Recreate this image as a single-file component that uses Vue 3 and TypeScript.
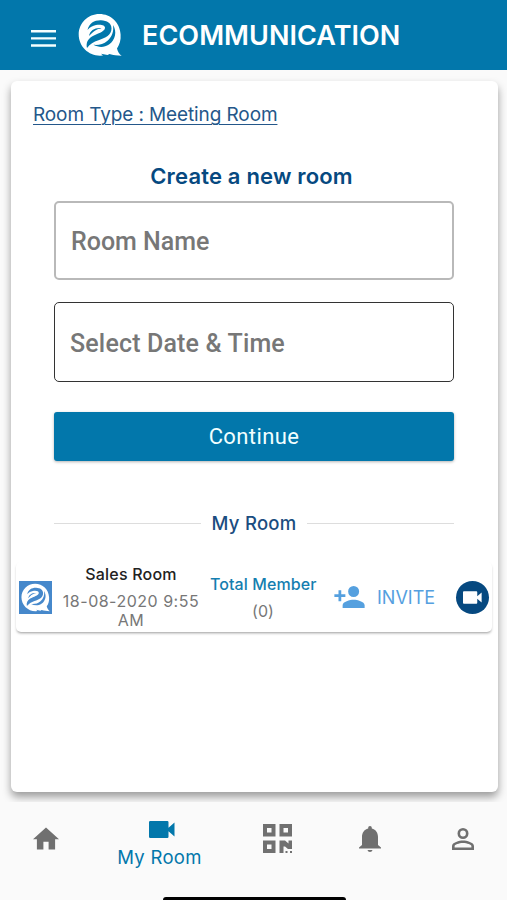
<script setup lang="ts">
import { ref } from 'vue'

interface Room {
  name: string
  date: string
  members: number
}

const rooms = ref<Room[]>([{ name: 'Sales Room', date: '18-08-2020 9:55 AM', members: 0 }])
const roomName = ref('')
const roomTime = ref('')
</script>

<template>
  <div class="app">
    <svg class="symbols" aria-hidden="true">
      <symbol id="logo" viewBox="0 0 44 44">
        <path
          d="M21.4 1C9.8 1 .7 10.2.7 21.5.7 33.300 10.400 42.700 22 42.700l3-.2-2-1.800 6.500 1.200c.7-.3 1.400-.6 2-.9 3.500 1.200 7.500 1.700 12.200 1.700-2.400-1.700-3.900-4-4.700-7.300C41.700 31.500 43 27 42.600 21.500 42 9.500 32.800 1 21.400 1Z"
        />
        <g class="swirl">
          <path d="M9.500 17C11 10 17 7 23 7.300c6 .2 10.500 3 10.500 8.200 0 6.500-6 9.500-13 11.700-5 1.600-8.500 3.800-11.500 7.800-1.200-5 .8-9 5-11.500 5-3 12.500-4.500 13-8.500.3-3-4.500-4-9-3-3.500.7-6 2-8.500 5Z" />
          <path d="M11 23c1-5.500 6-8.500 12.500-7.800-5 1-7.500 2.300-12.500 7.800Z" />
          <path d="M35 12c4.200 6.500 2.500 15-4 19.500-5 3.300-10.500 3-15.500.3 5 .5 10-.6 14-4.100 4.500-4 6.500-9.200 5.500-15.700Z" />
        </g>
      </symbol>
      <symbol id="camera" viewBox="0 0 26 17">
        <path d="M1.200 0h17.100A1.200 1.200 0 0 1 19.500 1.200v5.600L25.500 1.500v14l-6-5.300v5.600a1.200 1.200 0 0 1-1.200 1.200H1.200A1.200 1.200 0 0 1 0 15.800V1.200A1.200 1.200 0 0 1 1.200 0Z" />
      </symbol>
    </svg>

    <header class="bar">
      <button class="menu" aria-label="Menu">
        <svg viewBox="0 0 25 17"><path d="M0 0h25v2.400H0ZM0 7.200h25v2.400H0ZM0 14.300h25v2.400H0Z" /></svg>
      </button>
      <svg class="logo"><use href="#logo" /></svg>
      <h1>ECOMMUNICATION</h1>
    </header>

    <main class="body">
      <section class="card">
        <a class="type">Room Type : Meeting Room</a>
        <form class="form" @submit.prevent>
          <h2>Create a new room</h2>
          <input v-model="roomName" class="field" placeholder="Room Name" />
          <input v-model="roomTime" class="field dark" placeholder="Select Date &amp; Time" />
          <button class="continue">Continue</button>
          <div class="divider"><span>My Room</span></div>
        </form>

        <article v-for="room in rooms" :key="room.name" class="room">
          <svg class="avatar" viewBox="-3 -3 50 50"><use href="#logo" width="44" height="44" /></svg>
          <div class="info">
            <strong>{{ room.name }}</strong>
            <p>{{ room.date }}</p>
          </div>
          <div class="members">
            <span>Total Member</span>
            <p>({{ room.members }})</p>
          </div>
          <button class="invite">
            <svg viewBox="1 4 22 16"><path d="M15 12a4 4 0 1 0 0-8 4 4 0 0 0 0 8Zm-9-2V7H4v3H1v2h3v3h2v-3h3v-2H6Zm9 4c-2.670 0-8 1.340-8 4v2h16v-2c0-2.660-5.330-4-8-4Z" /></svg>
            <span>INVITE</span>
          </button>
          <button class="call" aria-label="Join"><svg><use href="#camera" /></svg></button>
        </article>
      </section>
    </main>

    <nav class="tabs">
      <a class="tab"><svg class="home" viewBox="2 3 20 17"><path d="M10 20v-6h4v6h5v-8h3L12 3 2 12h3v8h5Z" /></svg></a>
      <a class="tab active"><svg class="cam"><use href="#camera" /></svg><span>My Room</span></a>
      <a class="tab">
        <svg class="qr" viewBox="0 0 29 29">
          <path fill-rule="evenodd" d="M0 0h12.500v12.500H0ZM4 4v4.500h4.500V4ZM16.500 0H29v12.500H16.500ZM20.500 4v4.500H25V4ZM0 16.500h12.500V29H0ZM4 20.500V25h4.500v-4.500ZM16.500 16.500h5.500l3.500 3V16.500H29V25h-4l-3-2.500h-1.500V29h-4ZM22.500 27h2v2h-2ZM27 27h2v2h-2Z" />
        </svg>
      </a>
      <a class="tab"><svg class="bell" viewBox="0 0 22 26"><path d="M11 0c1.200 0 1.800.8 1.800 2v.5C17 3.500 19 7 19 11v8l3 2.500v1H0v-1L3 19v-8c0-4 2-7.500 6.200-8.500V2C9.200.8 9.800 0 11 0ZM8.500 24h5c-.3 1.300-1.200 2-2.500 2s-2.200-.7-2.500-2Z" /></svg></a>
      <a class="tab"><svg class="person" viewBox="4 4 16 16"><path d="M12 5.900a2.100 2.100 0 1 1 0 4.200 2.100 2.100 0 0 1 0-4.200m0 9c2.970 0 6.100 1.460 6.100 2.100v1.100H5.900V17c0-.64 3.130-2.100 6.100-2.100M12 4a4 4 0 1 0 0 8 4 4 0 0 0 0-8Zm0 9c-2.670 0-8 1.340-8 4v3h16v-3c0-2.660-5.330-4-8-4Z" /></svg></a>
    </nav>
    <div class="home-indicator"></div>
  </div>
</template>

<style>
body {
  margin: 0;
  background: #fafafa;
}
</style>

<style scoped>
.app {
  --swirl: #0277ab;
  display: flex;
  flex-direction: column;
  height: 900px;
  overflow: hidden;
  background: #fafafa;
  font-family: Inter, "Liberation Sans", sans-serif;
}
.app * {
  box-sizing: border-box;
}
.symbols {
  position: absolute;
  width: 0;
  height: 0;
}
button {
  border: 0;
  padding: 0;
  background: none;
  font: inherit;
}
h1, h2, p {
  margin: 0;
}
svg {
  display: block;
  fill: currentColor;
  flex: none;
}
.bar {
  display: flex;
  flex: none;
  height: 70px;
  padding-left: 31px;
  background: #0277ab;
  color: #fff;
}
.menu {
  align-self: flex-start;
  width: 25px;
  margin-top: 29.500px;
  color: #f4ffff;
}
.menu svg {
  width: 25px;
  height: 17px;
}
.logo {
  width: 44px;
  height: 44px;
  margin: 13px 0 0 22px;
}
.swirl {
  fill: var(--swirl);
}
h1 {
  margin: 19px 0 0 20px;
  font-size: 27px;
  line-height: 34px;
  font-weight: 600;
  letter-spacing: 0.050px;
}
.body {
  flex: none;
  height: 732px;
  padding: 11px 9px 0 11px;
  overflow: hidden;
}
.card {
  height: 711px;
  padding: 22px 6px 0 5px;
  border-radius: 6px;
  background: #fff;
  box-shadow: 0 5px 8px rgba(0, 0, 0, 0.38);
}
.type {
  display: block;
  margin-left: 17px;
  color: #24578a;
  font-size: 19px;
  line-height: 24px;
  letter-spacing: -0.110px;
  text-decoration: underline;
  text-decoration-thickness: 1px;
  text-underline-offset: 3px;
}
.form {
  display: flex;
  flex-direction: column;
  padding: 0 38px;
}
h2 {
  margin-top: 34px;
  color: #064980;
  font-size: 22px;
  line-height: 30px;
  font-weight: 600;
  letter-spacing: 0.180px;
  text-align: center;
  text-indent: -5px;
}
.field {
  height: 79px;
  margin-top: 10px;
  padding: 2px 15px 0;
  border: 2px solid #b9b9b9;
  border-radius: 5px;
  outline: 0;
  background: #fff;
  font: 500 25px Roboto, sans-serif;
  letter-spacing: 0;
}
.field::placeholder {
  color: #777;
  opacity: 1;
}
.field.dark {
  height: 80px;
  margin-top: 22px;
  border: 1.500px solid #333;
  letter-spacing: 0.160px;
}
.continue {
  height: 49px;
  margin-top: 30px;
  border-radius: 3px;
  background: #0277ab;
  box-shadow: 0 1px 3px rgba(0, 0, 0, 0.3);
  color: #f2ffff;
  font: 400 22px Roboto, sans-serif;
  letter-spacing: 0.400px;
}
.divider {
  display: flex;
  align-items: center;
  gap: 11px;
  height: 24px;
  margin-top: 50px;
  color: #1b4d80;
  font-size: 18.500px;
  font-weight: 500;
  letter-spacing: 0.250px;
}
.divider::before,
.divider::after {
  content: "";
  flex: 1;
  height: 1px;
  background: #ddd;
}
.room {
  display: flex;
  align-items: center;
  height: 70px;
  margin-top: 27px;
  padding: 0 3px;
  border-radius: 5px;
  background: #fff;
  box-shadow: 0 2px 3px -1px rgba(0, 0, 0, 0.4);
}
.avatar {
  --swirl: #4688cb;
  width: 33px;
  height: 33px;
  background: #4688cb;
  color: #fff;
}
.info {
  width: 158px;
  padding-bottom: 2px;
  text-align: center;
}
.info strong {
  display: block;
  color: #222;
  font-size: 16px;
  line-height: 22px;
  font-weight: 500;
  letter-spacing: 0.200px;
}
.info p {
  width: 150px;
  margin: 7px auto 0;
  color: #777;
  font-size: 16px;
  line-height: 19px;
  letter-spacing: 0.500px;
}
.members {
  width: 106px;
  text-align: center;
  white-space: nowrap;
  color: #147eb0;
  font-size: 16px;
  line-height: 20px;
  font-weight: 500;
  letter-spacing: 0.080px;
}
.members p {
  margin-top: 7px;
  color: #777;
  font-weight: 400;
}
.invite {
  display: flex;
  align-items: center;
  gap: 12px;
  margin-left: 18px;
  color: #55a0df;
  font-size: 18px;
}
.invite svg {
  width: 31px;
  height: 22px;
}
.call {
  display: grid;
  place-items: center;
  width: 33px;
  height: 33px;
  margin-left: auto;
  border-radius: 50%;
  background: #064980;
  color: #fff;
}
.call svg {
  width: 19px;
  height: 13px;
}
.tabs {
  display: flex;
  flex: none;
  height: 95px;
  color: #707070;
}
.tab {
  display: flex;
  flex-direction: column;
  align-items: center;
  width: 92px;
}
.tab.active {
  width: 139px;
  color: #0277ab;
  font-size: 18.500px;
  line-height: 24px;
  letter-spacing: 0.300px;
}
.tab.active span {
  margin-right: 4px;
}
.home {
  width: 26px;
  height: 23px;
  margin-top: 25px;
}
.cam {
  width: 26px;
  height: 17px;
  margin: 19px 0 7px;
}
.qr {
  width: 29px;
  height: 29px;
  margin-top: 22px;
}
.bell {
  width: 22px;
  height: 26px;
  margin: 24px 0 0 2px;
}
.person {
  width: 22px;
  height: 22px;
  margin: 26px 0 0 3px;
}
.home-indicator {
  flex: none;
  width: 183px;
  height: 6px;
  margin-left: 163px;
  border-radius: 3px;
  background: #000;
}
</style>
